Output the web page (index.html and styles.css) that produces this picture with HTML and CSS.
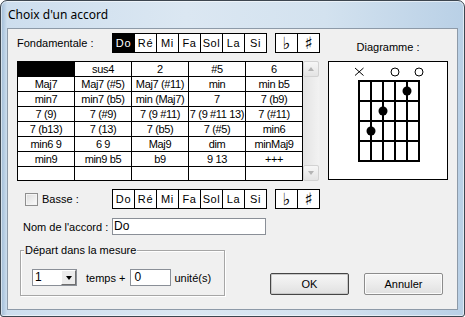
FILE: index.html
```html
<!DOCTYPE html>
<html lang="fr">
<head>
  <meta charset="UTF-8" />
  <title>Choix d'un accord</title>
  <link rel="stylesheet" href="styles.css">
</head>
<body>
  <div class="window">
    <div class="titlebar">Choix d'un accord</div>
    <div class="client">

      <div class="top">
        <div class="left">
          <div class="row">
            <span class="label label-fond">Fondamentale :</span>
            <div class="notes">
              <span class="note is-on">Do</span>
              <span class="note">Ré</span>
              <span class="note">Mi</span>
              <span class="note">Fa</span>
              <span class="note">Sol</span>
              <span class="note">La</span>
              <span class="note">Si</span>
            </div>
            <div class="notes accidentals">
              <span class="note sign">&#9837;</span>
              <span class="note sign">&#9839;</span>
            </div>
          </div>

          <div class="chords">
            <div class="chord-grid">
              <div class="cell cell-dark"></div><div class="cell">sus4</div><div class="cell">2</div><div class="cell">#5</div><div class="cell">6</div>
              <div class="cell">Maj7</div><div class="cell">Maj7 (#5)</div><div class="cell">Maj7 (#11)</div><div class="cell">min</div><div class="cell">min b5</div>
              <div class="cell">min7</div><div class="cell">min7 (b5)</div><div class="cell">min (Maj7)</div><div class="cell">7</div><div class="cell">7 (b9)</div>
              <div class="cell">7 (9)</div><div class="cell">7 (#9)</div><div class="cell">7 (9 #11)</div><div class="cell">7 (9 #11 13)</div><div class="cell">7 (#11)</div>
              <div class="cell">7 (b13)</div><div class="cell">7 (13)</div><div class="cell">7 (b5)</div><div class="cell">7 (#5)</div><div class="cell">min6</div>
              <div class="cell">min6 9</div><div class="cell">6 9</div><div class="cell">Maj9</div><div class="cell">dim</div><div class="cell">minMaj9</div>
              <div class="cell">min9</div><div class="cell">min9 b5</div><div class="cell">b9</div><div class="cell">9 13</div><div class="cell">+++</div>
              <div class="cell"></div><div class="cell"></div><div class="cell"></div><div class="cell"></div><div class="cell"></div>
            </div>
            <div class="scrollbar">
              <span class="scroll-btn"><span class="arrow arrow-up"></span></span>
              <span class="scroll-track"></span>
              <span class="scroll-btn"><span class="arrow arrow-down"></span></span>
            </div>
          </div>
        </div>

        <div class="right">
          <div class="diag-label">Diagramme :</div>
          <div class="diagram">
            <svg width="118" height="117" viewBox="0 0 118 117">
              <g stroke="#000" stroke-width="1" fill="none">
                <line x1="26" y1="6" x2="34.5" y2="13.5" />
                <line x1="34.5" y1="6" x2="26" y2="13.5" />
                <circle cx="66" cy="10" r="4" />
                <circle cx="90" cy="10" r="4" />
              </g>
              <g stroke="#000" stroke-width="2">
                <line x1="30" y1="19" x2="30" y2="99" />
                <line x1="42" y1="19" x2="42" y2="99" />
                <line x1="54" y1="19" x2="54" y2="99" />
                <line x1="66" y1="19" x2="66" y2="99" />
                <line x1="78" y1="19" x2="78" y2="99" />
                <line x1="90" y1="19" x2="90" y2="99" />
                <line x1="29" y1="19" x2="91" y2="19" />
                <line x1="29" y1="39" x2="91" y2="39" />
                <line x1="29" y1="59" x2="91" y2="59" />
                <line x1="29" y1="79" x2="91" y2="79" />
                <line x1="29" y1="99" x2="91" y2="99" />
              </g>
              <g fill="#000">
                <circle cx="78" cy="29" r="4.5" />
                <circle cx="54" cy="49" r="4.5" />
                <circle cx="42" cy="69" r="4.5" />
              </g>
            </svg>
          </div>
        </div>
      </div>

      <div class="row row-bass">
        <span class="label label-wide">
          <span class="checkbox"></span>
          <span class="check-text">Basse :</span>
        </span>
        <div class="notes">
          <span class="note">Do</span>
          <span class="note">Ré</span>
          <span class="note">Mi</span>
          <span class="note">Fa</span>
          <span class="note">Sol</span>
          <span class="note">La</span>
          <span class="note">Si</span>
        </div>
        <div class="notes accidentals">
          <span class="note sign">&#9837;</span>
          <span class="note sign">&#9839;</span>
        </div>
      </div>

      <div class="row row-name">
        <span class="label label-wide label-name">Nom de l'accord :</span>
        <span class="field field-name">Do</span>
      </div>

      <div class="bottom">
        <div class="group">
          <span class="legend">Départ dans la mesure</span>
          <div class="group-row">
            <span class="select">
              <span class="select-value">1</span>
              <span class="select-btn"><span class="arrow arrow-down arrow-dark"></span></span>
            </span>
            <span class="unit-text">temps +</span>
            <span class="field field-units">0</span>
            <span class="unit-text unit-after">unité(s)</span>
          </div>
        </div>
        <div class="buttons">
          <button class="btn btn-default">OK</button>
          <button class="btn">Annuler</button>
        </div>
      </div>

    </div>
  </div>
</body>
</html>
```

FILE: styles.css
```css
html, body {
  margin: 0;
  padding: 0;
  width: 465px;
  height: 317px;
  overflow: hidden;
  background: #fff;
}

.window {
  box-sizing: border-box;
  width: 465px;
  height: 317px;
  display: flex;
  flex-direction: column;
  padding: 0 6px 6px 6px;
  border: 1px solid #3d4650;
  border-radius: 7px 7px 3px 3px;
  background: linear-gradient(to right, #9fbbd6 0, #cddeee 6px, #dbe7f2 40%, #d3e2ef 70%, #b9d0e6 100%);
  box-shadow: inset 0 0 0 1px rgba(255, 255, 255, 0.55);
}

.titlebar {
  height: 27px;
  line-height: 27px;
  padding-left: 1px;
  font-family: "Noto Sans", "Open Sans", sans-serif;
  font-size: 12px;
  color: #000;
}

.client {
  flex: 1;
  border: 1px solid #8d9aa8;
  background: #f0f0f0;
  padding-top: 4px;
  font-family: "Liberation Sans", Arial, sans-serif;
  font-size: 11px;
  color: #000;
}

.top {
  display: flex;
}

.left {
  margin-left: 9px;
  width: 303px;
}

.row {
  display: flex;
  align-items: center;
  height: 20px;
}

.label {
  flex: none;
  white-space: nowrap;
}

.label-fond {
  width: 95px;
}

.label-wide {
  box-sizing: border-box;
  width: 104px;
  display: flex;
  align-items: center;
}

.notes {
  display: flex;
  border-left: 1px solid #000;
}

.note {
  width: 21px;
  height: 18px;
  line-height: 18px;
  border: 1px solid #000;
  border-left: 0;
  background: #fff;
  text-align: center;
  letter-spacing: 0.6px;
}

.note.is-on {
  background: #000;
  color: #fff;
}

.accidentals {
  margin-left: 8px;
}

.sign {
  font-family: "DejaVu Sans", sans-serif;
  font-size: 17px;
  letter-spacing: 0;
  overflow: hidden;
}

.chords {
  display: flex;
  margin-top: 8px;
}

.chord-grid {
  display: grid;
  grid-template-columns: repeat(5, 56px);
  grid-template-rows: repeat(7, 14px) 13px;
  gap: 1px;
  background: #000;
  border: 1px solid #000;
}

.cell {
  background: #fff;
  line-height: 14px;
  text-align: center;
  white-space: nowrap;
  overflow: hidden;
  letter-spacing: -0.35px;
}

.cell-dark {
  background: #000;
}

.scrollbar {
  width: 16px;
  display: flex;
  flex-direction: column;
  background: #ececec;
}

.scroll-btn {
  box-sizing: border-box;
  height: 16px;
  display: flex;
  align-items: center;
  justify-content: center;
  border: 1px solid #d2d2d2;
  border-radius: 2px;
  background: linear-gradient(#f6f6f6, #e4e4e4);
}

.scroll-track {
  flex: 1;
  background: linear-gradient(to right, #e3e3e3, #f2f2f2);
}

.arrow {
  width: 0;
  height: 0;
  border-left: 3.5px solid transparent;
  border-right: 3.5px solid transparent;
}

.arrow-up {
  border-bottom: 4px solid #b4b4b4;
}

.arrow-down {
  border-top: 4px solid #b4b4b4;
}

.arrow-dark {
  border-top-color: #000;
}

.right {
  margin-left: 8px;
  width: 120px;
}

.diag-label {
  margin-top: 7px;
  line-height: 14px;
  margin-bottom: 7px;
  text-align: center;
}

.diagram {
  box-sizing: border-box;
  width: 120px;
  height: 119px;
  border: 1px solid #000;
  background: #fff;
}

.diagram svg {
  display: block;
}

.row-bass {
  margin-top: 8px;
}

.row-bass .label-wide {
  padding-left: 17px;
}

.checkbox {
  box-sizing: border-box;
  width: 13px;
  height: 13px;
  border: 1px solid #8f8f8f;
  background: linear-gradient(135deg, #dcdcdc, #fcfcfc);
  box-shadow: inset 0 0 0 1px #f4f4f4;
}

.check-text {
  margin-left: 4px;
}

.row-name {
  margin-top: 9px;
  height: 17px;
}

.label-name {
  padding-left: 15px;
}

.field {
  box-sizing: border-box;
  height: 17px;
  line-height: 15px;
  border: 1px solid #8a8f97;
  background: #fff;
}

.field-name {
  width: 154px;
  padding-left: 1px;
  font-size: 12px;
}

.bottom {
  display: flex;
  align-items: flex-end;
  margin-top: 15px;
}

.group {
  box-sizing: border-box;
  width: 205px;
  height: 46px;
  margin-left: 12px;
  border: 1px solid #a6a6a6;
  box-shadow: inset 1px 1px 0 #fff, 1px 1px 0 #fff;
}

.legend {
  display: inline-block;
  margin-top: -7px;
  margin-left: 3px;
  padding: 0 1px;
  line-height: 13px;
  background: #f0f0f0;
  vertical-align: top;
}

.group-row {
  display: flex;
  align-items: center;
  margin-top: 6px;
  padding-left: 11px;
  height: 17px;
}

.select {
  box-sizing: border-box;
  width: 45px;
  height: 17px;
  display: flex;
  border: 1px solid #8a8f97;
  background: #fff;
}

.select-value {
  flex: 1;
  padding-left: 2px;
  line-height: 15px;
  font-size: 12px;
}

.select-btn {
  box-sizing: border-box;
  width: 15px;
  height: 15px;
  display: flex;
  align-items: center;
  justify-content: center;
  background: #ececec;
  border: 1px solid;
  border-color: #fff #6f6f6f #6f6f6f #fff;
}

.unit-text {
  margin-left: 9px;
}

.field-units {
  width: 41px;
  margin-left: 5px;
  padding-left: 3px;
  font-size: 12px;
}

.unit-after {
  margin-left: 3px;
}

.buttons {
  display: flex;
  gap: 15px;
  margin-left: auto;
  margin-right: 14px;
  margin-bottom: 1px;
}

.btn {
  box-sizing: border-box;
  width: 79px;
  height: 22px;
  padding: 0;
  font-family: "Liberation Sans", Arial, sans-serif;
  font-size: 11px;
  color: #000;
  border: 1px solid #8c8c8c;
  border-radius: 2px;
  background: linear-gradient(#f6f6f6 0, #ececec 50%, #e0e0e0 100%);
  box-shadow: inset 0 0 0 1px #fbfbfb;
}

.btn-default {
  border-color: #454545;
  box-shadow: inset 0 0 0 1px #c8c8c8;
}
```
